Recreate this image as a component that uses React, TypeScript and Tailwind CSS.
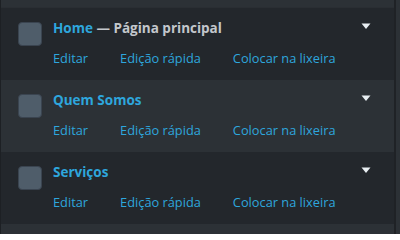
import React from "react";

type Row = { title: string; suffix?: string; alt?: boolean };

const rows: Row[] = [
  { title: "Home", suffix: " — Página principal" },
  { title: "Quem Somos", alt: true },
  { title: "Serviços" },
];

function Caret() {
  return (
    <svg width="10" height="7" viewBox="0 0 10 7" className="mt-[-4px] shrink-0" aria-hidden>
      <path d="M0.5 0.5 H9.5 L5 6 Z" fill="#e8eef2" />
    </svg>
  );
}

function PageRow({ row }: { row: Row }) {
  return (
    <div
      className={
        row.alt
          ? "flex h-[72px] bg-[#2c3136] pl-[17px] pr-[23px]"
          : "flex h-[72px] bg-[#23272c] pl-[17px] pr-[23px]"
      }
    >
      <div className="mt-[14px] size-6 shrink-0 rounded-[4px] border border-[#3a4450] bg-[#4f5d6a]" />
      <div className="ml-[11px] flex flex-1 flex-col">
        <div className="mt-[11px] flex h-[18px] items-center justify-between">
          <div className="text-[13.5px] font-bold leading-[18px]">
            <span className="text-[#2ea6dd]">{row.title}</span>
            {row.suffix && <span className="text-[#c3c7cc]">{row.suffix}</span>}
          </div>
          <Caret />
        </div>
        <div className="mt-[12px] flex gap-[32px] text-[12.8px] leading-[18px] text-[#2ea6dd]">
          <span>Editar</span>
          <span>Edição rápida</span>
          <span>Colocar na lixeira</span>
        </div>
      </div>
    </div>
  );
}

export default function App() {
  return (
    <div
      className="flex h-[234px] w-[400px] overflow-hidden bg-[#2c3136]"
      style={{ fontFamily: '"Open Sans", "Noto Sans", sans-serif' }}
    >
      <div className="flex w-[394px] flex-col border-l border-[#1d2024] pt-[7px]">
        <div className="border-t border-[#2a2e33]" />
        {rows.map((r) => (
          <PageRow key={r.title} row={r} />
        ))}
      </div>
      <div className="w-[2px] bg-[#1f2226]" />
    </div>
  );
}
